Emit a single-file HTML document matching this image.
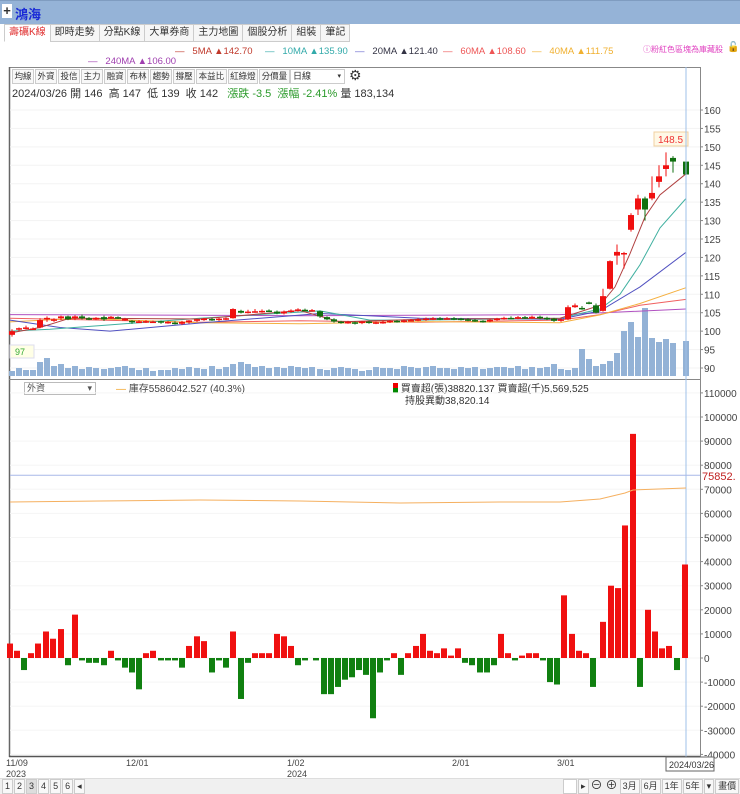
<!DOCTYPE html>
<html><head><meta charset="utf-8"><style>
*{margin:0;padding:0;box-sizing:border-box}
body{width:740px;height:794px;background:#fff;font-family:"Liberation Sans","Noto Sans CJK TC",sans-serif;position:relative;overflow:hidden;font-size:11px;color:#333}
.abs{position:absolute;white-space:nowrap}
.hdr{left:0;top:0;width:740px;height:24px;background:#95b3d7;border-top:1px solid #7f9cc0}
.tabs span{display:inline-block;border:1px solid #ccc;height:18px;line-height:16px;padding:0 4px;font-size:10px;margin-right:-1px;background:#f6f6f6;color:#333}
.tb span{display:inline-block;border:1px solid #ccc;height:15px;line-height:13px;padding:0 2px;font-size:9px;margin-right:1px;background:#f8f8f8;color:#333;vertical-align:top}
.tb2 span{display:inline-block;border:1px solid #ccc;height:15px;line-height:13px;padding:0 1.5px;font-size:8.5px;margin-right:1px;background:#f8f8f8;color:#333;vertical-align:top}
.lg{font-size:9.5px}
</style></head><body>
<div class="abs hdr"></div>
<div class="abs" style="left:2px;top:4px;width:10px;height:14px;background:#fff;font-size:13px;font-weight:bold;line-height:13px;text-align:center">+</div>
<div class="abs" style="left:15px;top:4px;font-size:13px;font-weight:bold;color:#1a2bd6">鴻海</div>
<div class="abs tabs" style="left:4px;top:24px"><span style="color:#e03030;background:#fff;border-bottom-color:#fff">壽礪K線</span><span>即時走勢</span><span>分點K線</span><span>大單券商</span><span>主力地圖</span><span>個股分析</span><span>組裝</span><span>筆記</span></div>
<div class="abs lg" style="left:175px;top:46px;color:#c0392b">— &nbsp; 5MA ▲142.70</div>
<div class="abs lg" style="left:265px;top:46px;color:#3aa"><span>—</span> &nbsp; 10MA ▲135.90</div>
<div class="abs lg" style="left:355px;top:46px;color:#334"><span style="color:#66c">—</span> &nbsp; 20MA ▲121.40</div>
<div class="abs lg" style="left:443px;top:46px;color:#e55"><span>—</span> &nbsp; 60MA ▲108.60</div>
<div class="abs lg" style="left:532px;top:46px;color:#f0b030"><span>—</span> &nbsp; 40MA ▲111.75</div>
<div class="abs lg" style="left:643px;top:44px;color:#e040c0;font-size:8px">ⓘ粉紅色區塊為庫藏股</div>
<div class="abs" style="left:727px;top:42px;font-size:10px">🔓</div>
<div class="abs lg" style="left:88px;top:56px;color:#a040b0">— &nbsp; 240MA ▲106.00</div>
<div class="abs" style="left:9px;top:67px;width:692px;height:1px;background:#888"></div>
<div class="abs tb2" style="left:12px;top:69px"><span>均線</span><span>外資</span><span>投信</span><span>主力</span><span>融資</span><span>布林</span><span>趨勢</span><span>撐壓</span><span>本益比</span><span>紅綠燈</span><span>分價量</span></div>
<div class="abs" style="left:290px;top:69px;width:55px;height:15px;border:1px solid #ccc;background:#fff;font-size:9px;line-height:13px;padding-left:2px">日線<span style="position:absolute;right:3px;font-size:7px">▾</span></div>
<div class="abs" style="left:349px;top:67px;font-size:14px">⚙</div>
<div class="abs" style="left:12px;top:85px;font-size:11px;color:#333">2024/03/26 開 146 &nbsp;高 147 &nbsp;低 139 &nbsp;收 142 &nbsp; <span style="color:#2a9a2a">漲跌 -3.5 &nbsp;漲幅 -2.41%</span> 量 183,134</div>
<div class="abs" style="left:24px;top:382px;width:72px;height:13px;border:1px solid #bbb;font-size:9px;line-height:11px;padding-left:2px;color:#555">外資<span style="float:right;padding-right:3px">▾</span></div>
<div class="abs" style="left:116px;top:380px;font-size:10px;color:#444"><span style="color:#f0a020">—</span> 庫存5586042.527 (40.3%)</div>
<div class="abs" style="left:393px;top:380px;font-size:10px;color:#333"><span style="display:inline-block;width:5px;height:10px;background:linear-gradient(#e00 50%,#080 50%);vertical-align:-1px"></span> 買賣超(張)38820.137 買賣超(千)5,569,525</div>
<div class="abs" style="left:405px;top:392px;font-size:10px;color:#333">持股異動38,820.14</div>
<svg id="s" class="abs" style="left:0;top:0" width="740" height="794"></svg>
<div class="abs" style="left:0;top:778px;width:740px;height:16px;background:#f0f0f0;border-top:1px solid #ddd"></div>
<div class="abs tb" style="left:2px;top:779px"><span>1</span><span>2</span><span style="background:#ddd">3</span><span>4</span><span>5</span><span>6</span><span>◂</span></div>
<div class="abs tb" style="left:563px;top:779px"><span style="width:14px;background:#fff"> </span><span>▸</span><span style="font-size:12px;border:0;background:none;padding:0 1px;line-height:12px">⊖</span><span style="font-size:12px;border:0;background:none;padding:0 1px;line-height:12px">⊕</span><span>3月</span><span>6月</span><span>1年</span><span>5年</span><span>▾</span><span>畫價</span></div>
<script>
var s=document.getElementById('s'),h='';
function L(x1,y1,x2,y2,c,w){h+='<line x1="'+x1+'" y1="'+y1+'" x2="'+x2+'" y2="'+y2+'" stroke="'+c+'" stroke-width="'+(w||1)+'"/>';}
function R(x,y,w,hh,c){if(hh<0){y+=hh;hh=-hh;}h+='<rect x="'+x+'" y="'+y+'" width="'+w+'" height="'+hh+'" fill="'+c+'"/>';}
function T(x,y,t,c,sz){h+='<text x="'+x+'" y="'+y+'" fill="'+(c||'#444')+'" font-size="'+(sz||10)+'" font-family="Liberation Sans,sans-serif">'+t+'</text>';}
function py(p){return 110+(160-p)*258/70;}
function by(v){return 658-v*2.41;}
L(9.5,67,9.5,757,'#666',1.5);L(700.5,67,700.5,757,'#888',1);L(9,379.5,700,379.5,'#888');L(9,756.5,700,756.5,'#555',1.5);
for(var p=90;p<=160;p+=5){var y=py(p);L(10,y,700,y,'#f3f3f3');L(700,y,703,y,'#888');T(704,y+4,p);}
for(var v=-40;v<=110;v+=10){var y=by(v);L(10,y,700,y,'#f5f5f5');L(700,y,703,y,'#888');T(704,y+4,v*1000);}
var cd=[[12,99,100,100.5,98.5],[19,100.5,100.8,101,100],[26,101,101,101.5,100.5],[33,100.5,100.7,101,100.3],[40,101,103,103.5,100.8],[47,103.2,103.6,104,102.5],[54,103,103.2,103.5,102.5],[61,103.5,104,104.2,103],[68,104,103.2,104.2,103],[75,103.5,104,104.3,103],[82,104,103.5,104.5,103.2],[89,103.5,103.2,103.8,103],[96,103.3,103.6,103.8,103],[104,103.8,103.2,104.2,102.8],[111,103.5,103.9,104.1,103.3],[118,103.8,103.5,104,103.3],[125,103.2,103.3,103.6,102.8],[132,102.8,102.5,103,102],[139,102.5,102.6,103,102.2],[146,102.4,102.7,103,102.2],[153,102.5,102.6,102.9,102.2],[161,102.7,102.3,102.9,102],[168,102.3,102.5,102.8,102],[175,102.3,102.2,102.7,101.8],[182,102,102.5,102.8,101.7],[189,102.4,102.9,103,102],[197,102.8,103.2,103.4,102.5],[204,103.2,103.4,103.6,102.8],[212,103.3,103,103.6,102.8],[219,103,103.4,103.6,102.8],[226,103.4,103.5,103.7,103],[233,103.5,106,106.2,103.4],[241,105.5,105,105.8,104.8],[248,105,105.3,105.8,104.8],[255,105.2,105.4,106,105],[262,105.4,105.5,105.9,105],[269,105.6,105.5,105.9,105.2],[277,105.3,104.8,105.6,104.6],[284,104.8,105.3,105.6,104.5],[291,105.2,105.6,105.9,105],[298,105.5,105.9,106.2,105.3],[305,105.8,105.6,106.1,105.4],[312,105.5,105.7,106,105.3],[320,105.4,104,105.6,103.6],[327,103.8,103.2,104,103],[334,103.2,102.6,103.5,102.3],[341,102.6,102.3,102.8,102],[348,102.2,102.5,102.8,102],[355,102.4,102.2,102.6,101.8],[362,102.2,102.6,102.8,101.9],[369,102.6,102.2,102.8,102],[376,102.2,102.4,102.6,101.9],[383,102.3,102.5,102.9,102],[390,102.5,102.8,103,102.2],[397,102.8,102.6,103,102.3],[404,102.6,102.9,103.2,102.3],[411,102.9,103,103.3,102.6],[418,103,103.2,103.5,102.7],[426,103.2,103.4,103.7,102.8],[433,103.3,103.5,103.8,103],[440,103.5,103.4,103.8,103],[447,103.4,103.5,103.8,103.1],[454,103.5,103.4,103.8,103],[461,103.4,103.2,103.6,102.9],[468,103.2,103,103.5,102.7],[475,103,102.8,103.3,102.5],[483,102.8,102.6,103,102.3],[490,102.6,103.1,103.3,102.4],[497,103.1,103.4,103.6,102.8],[504,103.4,103.6,103.9,103.1],[511,103.6,103.5,104,103.2],[518,103.5,103.8,104.1,103.2],[525,103.8,103.6,104.1,103.3],[532,103.6,103.9,104.2,103.3],[540,103.9,103.6,104.2,103.2],[547,103.6,103.4,103.9,103],[554,103.4,102.8,103.6,102.5],[561,102.8,103.2,103.5,102.5],[568,103.2,106.5,107,103],[575,106.5,107,107.5,106.3],[582,106.3,106,106.8,105.8],[589,107.8,107.5,108,107.3],[596,107,105,107.5,104.8],[603,105.5,109.5,111.5,105.3],[610,111.5,119,119.2,111.3],[617,120.5,121.5,123.5,118],[624,121,121.2,121.5,117],[631,127.5,131.5,132,127],[638,133,136,137,131.5],[645,136,133,136.5,130],[652,136,137.5,142,135.5],[659,140.5,142,145,139],[666,144,145,148.5,142],[673,147,146,147.5,143],[686,146,142.5,146.5,139]];
for(var i=0;i<cd.length;i++){var x=cd[i][0];var v=[5,8,6,6,14,18,10,12,8,10,7,9,8,7,8,9,10,8,6,8,5,6,6,8,7,9,8,7,10,7,9,12,14,12,9,10,8,9,8,10,9,8,9,7,6,8,9,8,7,5,6,9,8,8,7,10,9,8,9,10,8,8,7,9,8,9,7,8,9,9,8,10,7,9,8,9,12,7,6,8,27,17,10,12,15,23,45,54,39,68,38,34,37,33,35,31,31][i]||8;R(x-3,376,6,-v,'#93b2d6');}
function poly(pts,c){h+='<polyline fill="none" stroke="'+c+'" stroke-width="1" points="'+pts.map(function(a){return a[0]+','+py(a[1]).toFixed(1)}).join(' ')+'"/>';}
poly([[10,104.5],[200,104.3],[300,104.2],[560,104.5],[620,105.2],[686,106]],'#b050c0');
poly([[10,103.5],[100,103],[200,102.4],[300,102.8],[420,102.4],[560,103],[600,104.5],[640,107],[686,108.6]],'#f06060');
poly([[10,102.5],[80,103.5],[200,102.3],[300,102],[420,102.6],[560,102.3],[600,104.4],[640,107.5],[686,111.8]],'#f5b040');
poly([[10,103],[60,101],[110,100],[200,102.2],[320,104.8],[420,103.5],[560,103.2],[600,105.5],[640,112],[686,121.4]],'#5050c0');
poly([[10,100],[50,100.5],[100,101.5],[200,103.5],[320,105.5],[370,103],[420,103],[560,103.5],[600,106],[620,110],[640,118],[660,128],[686,136]],'#40b0a0');
poly([[10,99.5],[40,101],[70,103.5],[200,103.3],[300,105.6],[340,102.5],[420,103.2],[560,103.5],[600,107],[615,112],[630,121],[645,131],[660,137],[686,142.7]],'#b04040');
for(var i=0;i<cd.length;i++){var c=cd[i],x=c[0],up=c[2]>=c[1],col=up?'#f01010':'#107010';L(x,py(c[3]),x,py(c[4]),col);var t=py(Math.max(c[1],c[2])),b=py(Math.min(c[1],c[2]));R(x-3,t,6,Math.max(1.5,b-t),col);}
h+='<rect x="10" y="345" width="24" height="13" fill="#ffffe6" stroke="#dde" />';T(15,355,'97','#3a3',9);
h+='<rect x="654" y="132" width="34" height="14" fill="#fff8e6" stroke="#f0d0a0"/>';T(658,143,'148.5','#e33',10);
L(686,67,686,757,'#9fc0e8');
L(10,by(75.852),700,by(75.852),'#a8b8e8');T(702,by(75.852)+5,'75852.','#c02020',11);
var bb=[[10,6],[17,3],[24,-5],[31,2],[38,6],[46,11],[53,8],[61,12],[68,-3],[75,18],[82,-1],[89,-2],[96,-2],[104,-3],[111,3],[118,-1],[125,-4],[132,-6],[139,-13],[146,2],[153,3],[161,-1],[168,-1],[175,-1],[182,-4],[189,5],[197,9],[204,7],[212,-6],[219,-1],[226,-4],[233,11],[241,-17],[248,-2],[255,2],[262,2],[269,2],[277,10],[284,9],[291,5],[298,-3],[305,-1],[316,-1],[324,-15],[331,-15],[338,-12],[345,-9],[352,-8],[359,-5],[366,-7],[373,-25],[380,-6],[387,-1],[394,2],[401,-7],[408,2],[416,5],[423,10],[430,3],[437,2],[444,4],[451,1],[458,4],[465,-2],[472,-3],[480,-6],[487,-6],[494,-3],[501,10],[508,2],[515,-1],[522,1],[529,2],[536,2],[543,-1],[550,-10],[557,-11],[564,26],[572,10],[579,3],[586,2],[593,-12],[603,15],[611,30],[618,29],[625,55],[633,93],[640,-12],[648,20],[655,11],[662,4],[669,5],[677,-5],[685,38.8]];
for(var i=0;i<bb.length;i++){var v=bb[i][1];R(bb[i][0]-3,658,6,-v*2.41,v>=0?'#f01010':'#108010');}
var poly2=[[10,502],[100,501],[200,500],[300,501],[400,503],[500,502],[560,502],[600,499],[625,493],[633,490],[686,488]];
h+='<polyline fill="none" stroke="#f5b060" stroke-width="1" points="'+poly2.map(function(a){return a.join(',')}).join(' ')+'"/>';
var d=[[6,'11/09','2023'],[126,'12/01'],[287,'1/02','2024'],[452,'2/01'],[557,'3/01']];
d.forEach(function(a){T(a[0],766,a[1],'#444',9);if(a[2])T(a[0],777,a[2],'#444',9);});
h+='<rect x="666" y="757" width="48" height="14" fill="#fff" stroke="#666"/>';T(669,768,'2024/03/26','#333',9);
s.innerHTML=h;
</script>
</body></html>
